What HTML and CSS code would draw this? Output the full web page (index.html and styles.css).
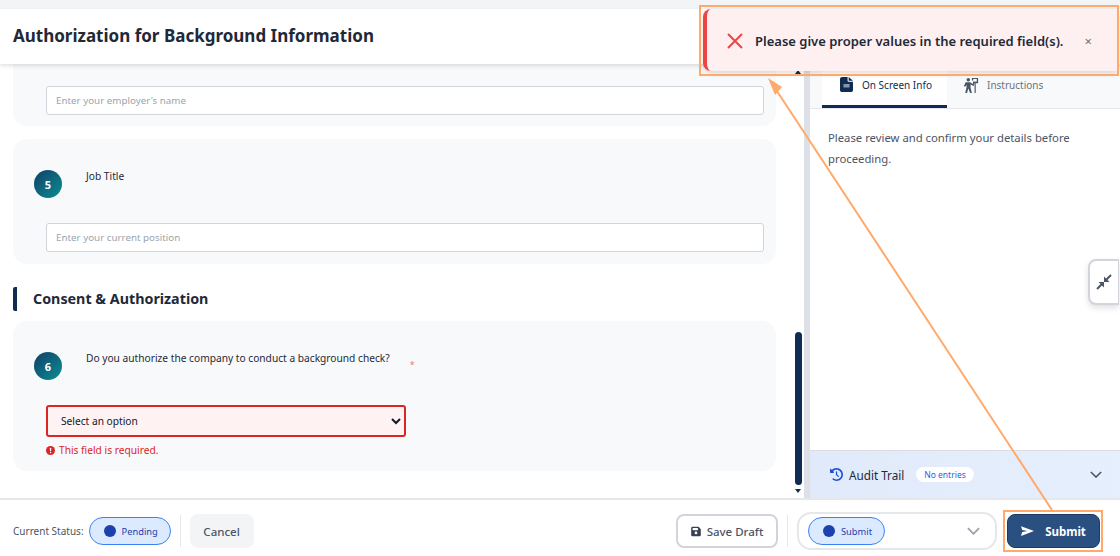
FILE: index.html
```html
<!DOCTYPE html>
<html lang="en">
  <head>
    <title>Authorization for Background Information</title>
    <meta charset="utf-8">
    <link rel="stylesheet" href="styles.css">
  </head>
  <body>

  <div class="page">
    <header class="page-header">
      <h1>Authorization for Background Information</h1>
    </header>

    <div class="main">
      <div class="form-pane">
        <div class="form-scroll">
          <section class="card card-cut">
            <input class="text-input" type="text" placeholder="Enter your employer's name">
          </section>

          <section class="card">
            <div class="question">
              <span class="step">5</span>
              <span class="question-label">Job Title</span>
            </div>
            <input class="text-input" type="text" placeholder="Enter your current position">
          </section>

          <h2 class="section-title">Consent &amp; Authorization</h2>

          <section class="card">
            <div class="question">
              <span class="step">6</span>
              <span class="question-label">Do you authorize the company to conduct a background check?</span>
              <span class="required">*</span>
            </div>
            <select class="select-input">
              <option>Select an option</option>
            </select>
            <div class="field-error">
              <svg viewBox="0 0 16 16" width="9" height="9"><circle cx="8" cy="8" r="8" fill="#dc2626"/><rect x="7" y="3.2" width="2.2" height="6" rx="1" fill="#fff"/><circle cx="8.1" cy="11.6" r="1.3" fill="#fff"/></svg>
              This field is required.
            </div>
          </section>
        </div>

        <div class="scrollbar">
          <span class="scroll-up"></span>
          <span class="scroll-thumb"></span>
          <span class="scroll-down"></span>
        </div>
      </div>

      <aside class="side-pane">
        <div class="tabs">
          <div class="tab active">
            <svg viewBox="0 0 384 512" width="13" height="15" preserveAspectRatio="none"><path fill="#0f2d52" d="M64 0C29 0 0 29 0 64v384c0 35 29 64 64 64h256c35 0 64-29 64-64V160H256c-18 0-32-14-32-32V0H64zm192 0v128h128L256 0zM112 256h160c9 0 16 7 16 16s-7 16-16 16H112c-9 0-16-7-16-16s7-16 16-16zm0 64h160c9 0 16 7 16 16s-7 16-16 16H112c-9 0-16-7-16-16s7-16 16-16z"/></svg>
            On Screen Info
          </div>
          <div class="tab">
            <svg viewBox="0 0 18 18" width="16" height="16"><g fill="#4b5563"><circle cx="6" cy="3" r="2"/><path d="M3 6h5l3 2 .6-4H10V1h7v6h-4.200l-.6 3L8.500 8.500V12l1.500 6H8L6 13l-1.500 5H2.500L4 11.500V9L2.500 11 1 10z"/></g><rect x="11.500" y="2.200" width="4" height="3" fill="#f8f9fb"/><rect x="13" y="7" width="1.300" height="11" fill="#4b5563"/></svg>
            Instructions
          </div>
        </div>
        <div class="side-body">
          <p>Please review and confirm your details before proceeding.</p>
        </div>
        <div class="audit">
          <svg viewBox="0 0 512 512" width="13" height="13"><path fill="#1d4ed8" d="M75 75L41 41C26 26 0 37 0 58V168c0 13 11 24 24 24H134c21 0 32-26 17-41l-31-31C155 86 203 64 256 64c106 0 192 86 192 192s-86 192-192 192c-41 0-79-13-110-34-14-10-34-7-44 8s-7 34 8 45c41 28 92 45 146 45 141 0 256-115 256-256S397 0 256 0C185 0 121 29 75 75zm181 53c-13 0-24 11-24 24V256c0 6 3 13 7 17l72 72c9 9 25 9 34 0s9-25 0-34l-65-65V152c0-13-11-24-24-24z"/></svg>
          <span class="audit-title">Audit Trail</span>
          <span class="audit-badge">No entries</span>
          <svg class="audit-chevron" viewBox="0 0 14 8" width="12" height="7" fill="none" stroke="#4b5563" stroke-width="1.800"><path d="M1 1l6 6 6-6"/></svg>
        </div>
      </aside>
    </div>

    <footer class="footer">
      <div class="footer-group">
        <span class="status-label">Current Status:</span>
        <span class="pill pill-pending"><i class="dot"></i>Pending</span>
        <span class="sep"></span>
        <button class="btn btn-cancel">Cancel</button>
      </div>
      <div class="footer-group">
        <button class="btn btn-draft">
          <svg viewBox="0 0 448 512" width="10" height="11"><path fill="#374151" d="M64 32C29 32 0 61 0 96v320c0 35 29 64 64 64h320c35 0 64-29 64-64V173c0-17-7-33-19-45l-74-77c-12-12-28-19-45-19H64zm0 96c0-18 14-32 32-32h192c18 0 32 14 32 32v32c0 18-14 32-32 32H96c-18 0-32-14-32-32v-32zm160 128a64 64 0 1 1 0 128 64 64 0 1 1 0-128z"/></svg>
          Save Draft
        </button>
        <span class="sep"></span>
        <div class="status-select">
          <span class="pill pill-submit"><i class="dot"></i>Submit</span>
          <svg viewBox="0 0 14 8" width="13" height="8" fill="none" stroke="#9ca3af" stroke-width="2"><path d="M1 1l6 6 6-6"/></svg>
        </div>
        <button class="btn btn-submit">
          <svg viewBox="0 0 16 12" width="13" height="10"><path fill="#fff" d="M0 0l16 6-16 6 1.500-4.800L8 6 1.500 4.800z"/></svg>
          Submit
        </button>
      </div>
    </footer>
  </div>

  <button class="collapse-tab">
    <svg viewBox="0 0 16 16" width="16" height="16" fill="#4b5563"><path d="M1 15l5-5" stroke="#4b5563" stroke-width="2"/><path d="M2.500 8H8v5.500z"/><path d="M15 1l-5 5" stroke="#4b5563" stroke-width="2"/><path d="M13.500 8H8V2.500z"/></svg>
  </button>

  <div class="toast">
    <svg viewBox="0 0 16 16" width="16" height="16" fill="none" stroke="#ef4444" stroke-width="2"><path d="M1 1l14 14M15 1L1 15"/></svg>
    <span class="toast-text">Please give proper values in the required field(s).</span>
    <span class="toast-close">&times;</span>
  </div>

  <svg class="annotations" viewBox="0 0 1120 556" width="1120" height="556">
    <rect x="700" y="6" width="418" height="69" fill="none" stroke="#ffa96b" stroke-width="2"/>
    <rect x="1004" y="511" width="98" height="40" fill="none" stroke="#ffa96b" stroke-width="2"/>
    <path d="M1052 510L773 85" stroke="#ffa96b" stroke-width="2" fill="none"/>
    <path d="M768 78L782 87L775 95z" fill="#ffa96b"/>
  </svg>

  </body>
</html>
```

FILE: styles.css
```css
* {
  box-sizing: border-box;
}

html, body {
  margin: 0;
  padding: 0;
  height: 100%;
}

body {
  background: #f3f4f6;
  color: #1f2937;
  font-family: "Noto Sans", sans-serif;
  font-size: 12px;
  overflow: hidden;
}

.page {
  display: flex;
  flex-direction: column;
  height: 556px;
  padding-top: 9px;
}

.page-header {
  display: flex;
  align-items: center;
  flex: 0 0 55px;
  padding: 0 13px 2px;
  background: #fff;
  box-shadow: 0 2px 4px rgba(0,0,0,0.12);
  position: relative;
  z-index: 2;
}

.page-header h1 {
  margin: 0;
  font-size: 17px;
  font-weight: 700;
  color: #1f2937;
}

.main {
  display: flex;
  flex: 1;
  min-height: 0;
  background: #fff;
}

.form-pane {
  display: flex;
  flex: 0 0 804px;
  overflow: hidden;
}

.form-scroll {
  flex: 0 0 790px;
  padding: 0 14px 0 13px;
}

.card {
  padding: 31px 12px 12px 21px;
  margin-bottom: 13px;
  background: #f8f9fb;
  border-radius: 14px;
}

.card-cut {
  height: 62px;
  padding-top: 22px;
  padding-left: 33px;
  border-radius: 0 0 14px 14px;
}

.question {
  display: flex;
  gap: 24px;
  height: 28px;
  margin-bottom: 25px;
}

.step {
  display: flex;
  align-items: center;
  justify-content: center;
  flex: 0 0 28px;
  height: 28px;
  border-radius: 50%;
  background: linear-gradient(135deg, #123f66, #0a8f94);
  color: #fff;
  font-size: 11px;
  font-weight: 700;
}

.question-label {
  font-size: 10.2px;
  line-height: 13px;
  color: #1f2937;
}

.required {
  margin: 7px 0 0 -4px;
  font-size: 9px;
  line-height: 12px;
  color: #ef4444;
  opacity: 0.7;
}

.text-input {
  display: block;
  width: 718px;
  height: 29px;
  margin-left: 12px;
  padding: 0 9px 1px;
  background: #fff;
  border: 1px solid #d1d5db;
  border-radius: 3px;
  font-family: inherit;
  font-size: 9.8px;
}

.text-input::placeholder {
  color: #9ca3af;
}

.card-cut .text-input {
  margin-left: 0;
}

.select-input {
  display: block;
  width: 360px;
  height: 32px;
  margin-left: 12px;
  padding: 0 9px;
  background-color: #fef2f2;
  border: 2px solid #dc2626;
  border-radius: 3px;
  color: #111827;
  font-family: inherit;
  font-size: 10.2px;
}

.field-error {
  display: flex;
  align-items: center;
  gap: 4px;
  margin: 6px 0 2px 12px;
  color: #dc2626;
  font-size: 10.2px;
  line-height: 14px;
}

.section-title {
  margin: 23px 0 10px;
  padding-left: 16px;
  border-left: 4px solid #0f2d52;
  border-radius: 2px;
  font-size: 14.3px;
  font-weight: 700;
  line-height: 24px;
  color: #1f2937;
}

.scrollbar {
  display: flex;
  flex-direction: column;
  align-items: center;
  flex: 0 0 8px;
  margin-left: 4px;
  padding-top: 6px;
  height: 429px;
}

.scroll-up {
  border: 3px solid transparent;
  border-top: 0;
  border-bottom: 4px solid #0f2d52;
}

.scroll-thumb {
  flex: 0 0 153px;
  width: 7px;
  margin-top: auto;
  border-radius: 4px;
  background: #0f2d52;
}

.scroll-down {
  margin-top: 4px;
  border: 3px solid transparent;
  border-bottom: 0;
  border-top: 4px solid #0f2d52;
}

.side-pane {
  display: flex;
  flex-direction: column;
  flex: 1;
  border-left: 6px solid #dde0e6;
}

.tabs {
  display: flex;
  flex: 0 0 45px;
  padding: 0 12px;
  background: #f8f9fb;
  border-bottom: 1px solid #e5e7eb;
}

.tab {
  display: flex;
  align-items: center;
  gap: 8px;
  width: 110px;
  padding: 0 0 3px 16px;
  font-size: 10px;
  color: #6b7280;
}

.tab.active {
  width: 125px;
  padding: 0 0 0 18px;
  gap: 9px;
  background: #fff;
  border-bottom: 3px solid #0f2d52;
  color: #0f2d52;
}

.side-body {
  flex: 1;
  padding: 18px;
}

.side-body p {
  margin: 0;
  font-size: 11.3px;
  line-height: 21px;
  color: #4b5563;
}

.audit {
  display: flex;
  align-items: center;
  flex: 0 0 48px;
  padding: 0 18px 0 20px;
  background: linear-gradient(90deg, #e0eafa, #e6effd);
  border-top: 1px solid #d9dde3;
}

.audit-title {
  margin-left: 6px;
  font-size: 11.7px;
  color: #1f2937;
}

.audit-badge {
  margin-left: 12px;
  padding: 2px 8px;
  border-radius: 10px;
  background: #fff;
  color: #2563eb;
  font-size: 8.5px;
}

.audit-chevron {
  margin-left: auto;
}

.footer {
  display: flex;
  align-items: center;
  justify-content: space-between;
  flex: 0 0 58px;
  padding: 6px 20px 0 13px;
  background: #fff;
  border-top: 2px solid #e5e7eb;
  position: relative;
  z-index: 2;
}

.footer-group {
  display: flex;
  align-items: center;
}

.status-label {
  margin-right: 5px;
  font-size: 10px;
  color: #4b5563;
}

.pill {
  display: inline-flex;
  align-items: center;
  height: 28px;
  border: 1px solid #3b82f6;
  border-radius: 14px;
  background: #dbeafe;
  color: #1e40af;
  font-size: 9.3px;
}

.pill-pending {
  width: 82px;
  padding-left: 14px;
}

.pill-submit {
  width: 77px;
  padding-left: 14px;
}

.dot {
  width: 12px;
  height: 12px;
  margin-right: 6px;
  border-radius: 50%;
  background: #1e40af;
}

.sep {
  width: 1px;
  height: 32px;
  margin: 0 9px;
  background: #e5e7eb;
}

.btn {
  display: inline-flex;
  align-items: center;
  justify-content: center;
  height: 34px;
  font-family: inherit;
  font-size: 11.5px;
  font-weight: 500;
  border-radius: 8px;
  border: 0;
}

.btn-cancel {
  width: 64px;
  background: #f3f4f6;
  color: #4b5563;
}

.btn-draft {
  gap: 6px;
  width: 102px;
  background: #fff;
  border: 2px solid #d1d5db;
  color: #4b5563;
}

.status-select {
  display: flex;
  align-items: center;
  justify-content: space-between;
  width: 200px;
  height: 38px;
  padding: 0 15px 0 9px;
  margin-right: 10px;
  border: 2px solid #e5e7eb;
  border-radius: 14px;
  background: #fff;
}

.btn-submit {
  gap: 11px;
  width: 93px;
  background: #2a5082;
  border: 1px solid #1e3a64;
  color: #fff;
  font-weight: 700;
}

.collapse-tab {
  display: flex;
  align-items: center;
  justify-content: center;
  position: absolute;
  left: 1088px;
  top: 259px;
  width: 31px;
  height: 46px;
  padding: 0 1px 0 0;
  background: #fff;
  border: 2px solid #d1d5db;
  border-right-width: 1px;
  border-radius: 8px 0 0 8px;
  box-shadow: 0 3px 6px rgba(0,0,0,0.12);
}

.toast {
  display: flex;
  align-items: center;
  position: absolute;
  left: 703px;
  top: 9px;
  width: 415px;
  height: 62px;
  padding: 2px 26px 0 20px;
  background: #fef0f0;
  border-left: 4px solid #ef4444;
  border-radius: 8px 0 0 8px;
  box-shadow: 0 2px 6px rgba(0,0,0,0.15);
  z-index: 3;
}

.toast-text {
  margin-left: 12px;
  font-size: 13px;
  font-weight: 600;
  color: #1f2937;
}

.toast-close {
  margin-left: auto;
  font-size: 13px;
  color: #6b7280;
}

.annotations {
  position: absolute;
  left: 0;
  top: 0;
  z-index: 4;
  pointer-events: none;
}
```
